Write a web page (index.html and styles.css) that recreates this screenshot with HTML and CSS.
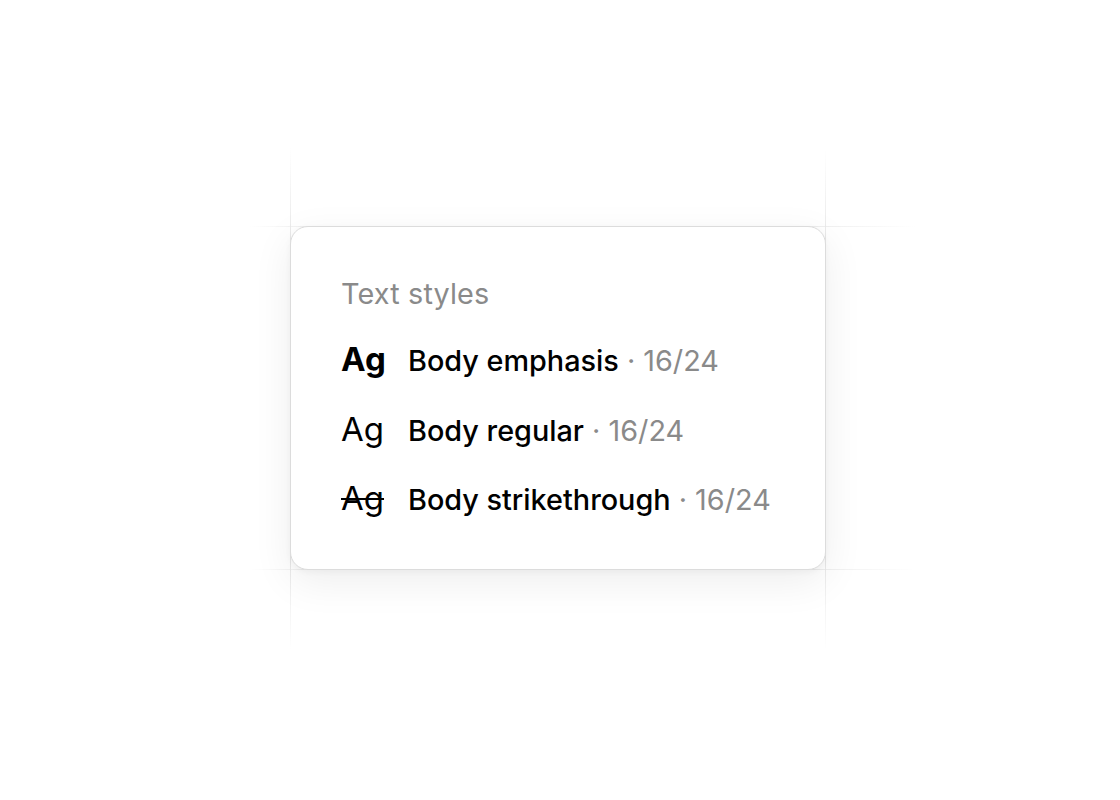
FILE: index.html
```html
<!DOCTYPE html>
<html>
<head>
<meta charset="utf-8">
<link rel="stylesheet" href="styles.css">
</head>
<body>
<div class="stage">
  <div class="guide guide-v guide-left"></div>
  <div class="guide guide-v guide-right"></div>
  <div class="guide guide-h guide-top"></div>
  <div class="guide guide-h guide-bottom"></div>
  <div class="card">
    <div class="title">Text styles</div>
    <ul class="styles">
      <li class="row"><span class="sample sample-bold">Ag</span><span class="label"><span class="name">Body emphasis</span> <span class="meta">· 16/24</span></span></li>
      <li class="row"><span class="sample sample-regular">Ag</span><span class="label"><span class="name">Body regular</span> <span class="meta">· 16/24</span></span></li>
      <li class="row"><span class="sample sample-strike">Ag</span><span class="label"><span class="name">Body strikethrough</span> <span class="meta">· 16/24</span></span></li>
    </ul>
  </div>
</div>
</body>
</html>
```

FILE: styles.css
```css
* { box-sizing: border-box; }
html, body { margin: 0; padding: 0; background: #ffffff; }
body {
  height: 800px;
  display: flex;
  align-items: center;
  justify-content: center;
  font-family: Inter, "Noto Sans", sans-serif;
  color: #000;
}
.stage {
  position: relative;
  width: 536px;
  height: 344px;
  margin-left: -4px;
  margin-top: -4px;
}
.guide { position: absolute; pointer-events: none; }
.guide-v {
  width: 1px;
  top: -78px;
  bottom: -80px;
  background: linear-gradient(to bottom, rgba(230,230,230,0) 0%, #e8e8e8 18%, #e8e8e8 82%, rgba(230,230,230,0) 100%);
}
.guide-left { left: 0; }
.guide-right { right: 0; }
.guide-h {
  height: 1px;
  left: -40px;
  right: -90px;
  background: linear-gradient(to right, rgba(230,230,230,0) 0%, #e8e8e8 12%, #e8e8e8 80%, rgba(230,230,230,0) 100%);
}
.guide-top { top: 0; }
.guide-bottom { bottom: 0; }
.card {
  position: relative;
  width: 100%;
  height: 100%;
  background: #ffffff;
  border: 1.5px solid #dcdcdc;
  border-radius: 18px;
  box-shadow: 0 12px 40px rgba(0,0,0,0.07), 0 2px 6px rgba(0,0,0,0.04);
  padding: 49px 50px;
}
.title {
  font-size: 28.8px;
  line-height: 36px;
  color: #8a8a8a;
  font-weight: 400;
  letter-spacing: 0.15px;
}
.styles {
  list-style: none;
  margin: 27px 0 0 0;
  padding: 0;
  display: flex;
  flex-direction: column;
  gap: 27.5px;
}
.row {
  display: flex;
  align-items: baseline;
  line-height: 40px;
}
.sample {
  width: 67px;
  flex: none;
  font-size: 33px;
  color: #000;
}
.sample-bold { font-weight: 700; }
.sample-regular { font-weight: 400; }
.sample-strike { font-weight: 400; text-decoration: line-through; text-decoration-thickness: 2px; }
.label {
  font-size: 28.8px;
  white-space: nowrap;
}
.name {
  font-weight: 500;
  color: #000;
}
.meta {
  color: #8a8a8a;
  font-weight: 400;
}
```
